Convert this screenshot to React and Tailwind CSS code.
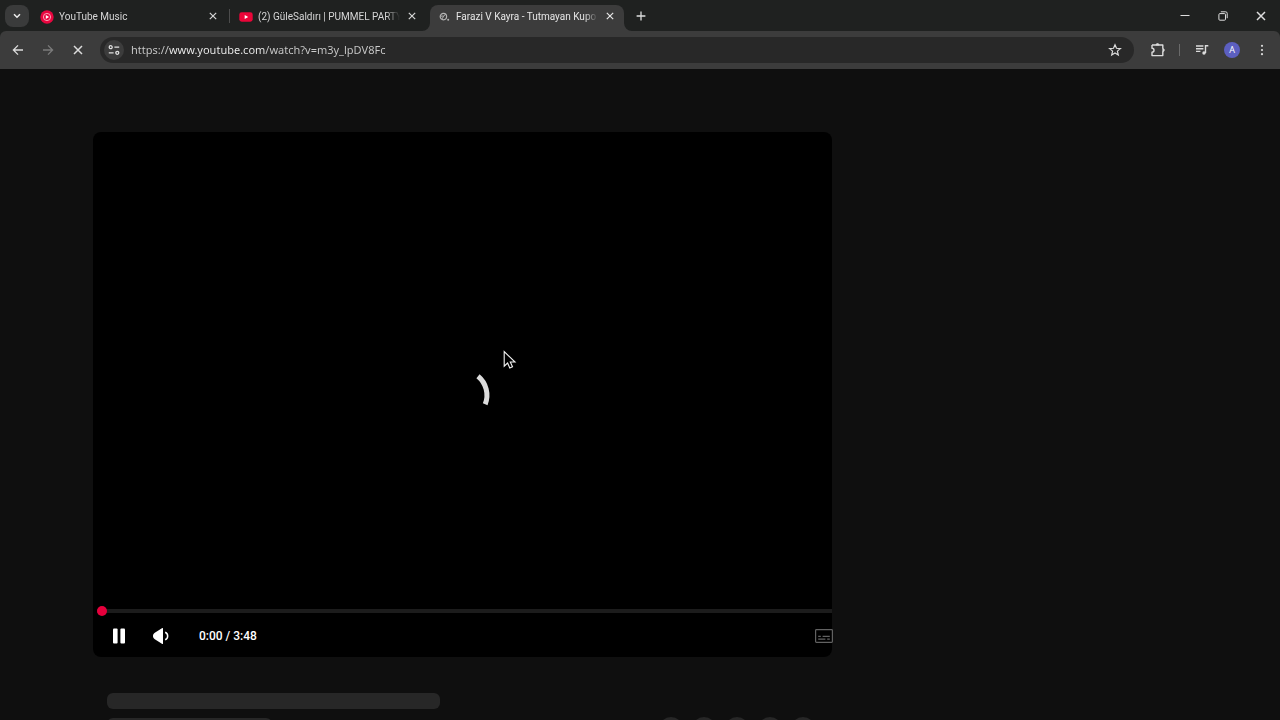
import React from "react";

function CloseIcon({ className }) {
  return (
    <svg viewBox="0 0 8 8" className={className} fill="none" stroke="currentColor" strokeWidth="1.2" aria-hidden="true">
      <path d="M0.8 0.8 7.2 7.2M7.2 0.8 0.8 7.2" />
    </svg>
  );
}

function MusicFavicon() {
  return (
    <svg viewBox="0 0 14 14" className="size-3.5 shrink-0" aria-hidden="true">
      <circle cx="7" cy="7" r="6.7" fill="#e8063f" />
      <circle cx="7" cy="7" r="3.6" fill="none" stroke="#ffc4d2" strokeWidth="0.8" />
      <path d="M5.8 5v4L9.1 7z" fill="#fff" />
    </svg>
  );
}

function VideoFavicon() {
  return (
    <svg viewBox="0 0 14 14" className="size-3.5 shrink-0" aria-hidden="true">
      <rect x="0.3" y="2.3" width="13.4" height="9.4" rx="2.4" fill="#ea0538" />
      <path d="M5.7 5v4L9.2 7z" fill="#fff" />
    </svg>
  );
}

function LoadingFavicon() {
  return (
    <svg viewBox="0 0 14 14" className="size-3.5 shrink-0" fill="none" stroke="#b4b4b4" aria-hidden="true">
      <circle cx="5.4" cy="6.6" r="3.2" strokeWidth="1.2" />
      <path d="M2.8 6.2 5.6 6 7.6 4.4M3.8 9 5.8 6.2" strokeWidth="1" />
      <circle cx="10.2" cy="9.8" r="1" fill="#b4b4b4" stroke="none" />
    </svg>
  );
}

function Tab({ icon, title, active, divided }) {
  return (
    <div
      className={
        active
          ? "relative flex h-[26px] w-[194px] shrink-0 items-center rounded-t-lg bg-[#3c3c3c] pr-2 pl-2 text-[#e6e6e6]"
          : "relative flex h-[26px] w-[199px] shrink-0 items-center pr-3 pl-2 text-[#d6d6d6]"
      }
    >
      {active && (
        <>
          <svg viewBox="0 0 8 8" className="absolute bottom-0 -left-2 size-2" aria-hidden="true">
            <path d="M8 0v8H0A8 8 0 0 0 8 0z" fill="#3c3c3c" />
          </svg>
          <svg viewBox="0 0 8 8" className="absolute -right-2 bottom-0 size-2" aria-hidden="true">
            <path d="M0 0v8h8A8 8 0 0 1 0 0z" fill="#3c3c3c" />
          </svg>
        </>
      )}
      {divided && <span className="absolute top-1 right-px h-3.5 w-px bg-[#4c4c4c]" />}
      <button
        type="button"
        role="tab"
        aria-selected={Boolean(active)}
        className={active ? "flex min-w-0 flex-1 items-center gap-1 pb-[3px]" : "flex min-w-0 flex-1 items-center gap-[5px] pb-[3px]"}
      >
        {icon}
        <span className="min-w-0 flex-1 overflow-hidden text-left font-[Roboto,sans-serif] text-[10px] leading-4 whitespace-nowrap [mask-image:linear-gradient(to_right,black_calc(100%-14px),transparent)]">
          {title}
        </span>
      </button>
      <button type="button" aria-label={`Close ${title}`} className="ml-1.5 flex h-4 w-3 shrink-0 items-center justify-center pb-1">
        <CloseIcon className="h-2 w-2" />
      </button>
    </div>
  );
}

function TabStrip() {
  return (
    <div className="flex h-[31px] items-end bg-[#1f2120] text-[#dedede]">
      <button type="button" aria-label="Search tabs" className="mr-[3px] mb-1 ml-[5px] flex h-[22px] w-6 items-center justify-center rounded-lg bg-[#3a3b3b]">
        <svg viewBox="0 0 8 6" className="h-1.5 w-2" fill="none" stroke="#ededed" strokeWidth="1.5" aria-hidden="true">
          <path d="M1 1.2 4 4.2 7 1.2" />
        </svg>
      </button>
      <div role="tablist" className="flex">
        <Tab icon={<MusicFavicon />} title="YouTube Music" divided />
        <Tab icon={<VideoFavicon />} title="(2) GüleSaldırı | PUMMEL PARTY" />
        <Tab icon={<LoadingFavicon />} title="Farazi V Kayra - Tutmayan Kupo" active />
      </div>
      <button type="button" aria-label="New tab" className="ml-[7px] flex h-[30px] w-5 items-center justify-center">
        <svg viewBox="0 0 10 10" className="size-2.5" fill="none" stroke="currentColor" strokeWidth="1.3" aria-hidden="true">
          <path d="M5 0.6v8.8M0.6 5h8.8" />
        </svg>
      </button>
      <div className="ml-auto flex h-[30px]">
        <button type="button" aria-label="Minimize" className="flex w-[38px] items-center justify-center">
          <svg viewBox="0 0 10 10" className="size-2.5" stroke="currentColor" aria-hidden="true"><path d="M0.5 4.5h9" /></svg>
        </button>
        <button type="button" aria-label="Restore" className="flex w-[38px] items-center justify-center">
          <svg viewBox="0 0 10 10" className="size-2.5" fill="none" stroke="currentColor" aria-hidden="true">
            <rect x="0.9" y="2.6" width="6.6" height="6.6" rx="1" />
            <path d="M2.8 0.8h4.8a1.6 1.6 0 0 1 1.6 1.6v4.8" />
          </svg>
        </button>
        <button type="button" aria-label="Close window" className="flex w-[38px] items-center justify-center">
          <CloseIcon className="size-2.5" />
        </button>
      </div>
    </div>
  );
}

function Toolbar() {
  return (
    <div className="bg-[#1f2120]">
      <div className="flex h-[38px] items-center rounded-t-md bg-[#3c3c3c] px-[3px] text-[#dcdcdc]">
        <button type="button" aria-label="Back" className="flex w-[30px] justify-center">
          <svg viewBox="0 0 12 12" className="size-3" fill="none" stroke="currentColor" strokeWidth="1.3" aria-hidden="true">
            <path d="M11 6H1.6M6 1.4 1.4 6 6 10.6" />
          </svg>
        </button>
        <button type="button" aria-label="Forward" className="flex w-[30px] justify-center text-[#7b7b7b]">
          <svg viewBox="0 0 12 12" className="size-3" fill="none" stroke="currentColor" strokeWidth="1.3" aria-hidden="true">
            <path d="M1 6h9.4M6 1.4 10.6 6 6 10.6" />
          </svg>
        </button>
        <button type="button" aria-label="Stop loading" className="flex w-[30px] justify-center">
          <CloseIcon className="size-2.5" />
        </button>
        <div className="ml-[7px] flex h-[26px] min-w-0 flex-1 items-center rounded-full bg-[#282828] pl-1">
          <button type="button" aria-label="View site information" className="flex size-5 shrink-0 items-center justify-center rounded-full bg-[#3c3c3c]">
            <svg viewBox="0 0 12 12" className="size-3" fill="none" stroke="#e0e0e0" strokeWidth="1.3" aria-hidden="true">
              <circle cx="2.7" cy="3.2" r="1.5" />
              <path d="M6.4 3.2h4.8M0.8 8.8h4.8" />
              <circle cx="9.3" cy="8.8" r="1.5" />
            </svg>
          </button>
          <input
            type="text"
            aria-label="Address"
            defaultValue="https://www.youtube.com/watch?v=m3y_lpDV8Fc"
            className="ml-[7px] h-5 min-w-0 flex-1 bg-[linear-gradient(to_right,#cccccc_37px,#f2f2f2_37px,#f2f2f2_134px,#cccccc_134px)] bg-clip-text pb-px font-['Noto_Sans',sans-serif] text-[11px] text-transparent caret-white outline-none"
          />
          <button type="button" aria-label="Bookmark this page" className="flex w-[38px] shrink-0 justify-center">
            <svg viewBox="0 0 14 14" className="size-3.5" fill="none" stroke="currentColor" strokeWidth="1.2" strokeLinejoin="miter" aria-hidden="true">
              <path d="M7 1.7 8.5 5.3 12.4 5.6 9.4 8.1 10.3 11.9 7 9.9 3.7 11.9 4.6 8.1 1.6 5.6 5.5 5.3z" />
            </svg>
          </button>
        </div>
        <button type="button" aria-label="Extensions" className="ml-2 flex w-8 justify-center">
          <svg viewBox="0 0 16 16" className="size-4" fill="none" stroke="currentColor" strokeWidth="1.4" strokeLinejoin="round" aria-hidden="true">
            <path d="M2 3h10.8v3.8M12.8 9.2V13.6H2v-3.4a2 2 0 0 0 0-4V3" />
            <path d="M6 3a1.5 1.5 0 0 1 3 0zM12.8 6.6a1.5 1.5 0 0 1 0 3z" fill="currentColor" strokeWidth="0.8" />
          </svg>
        </button>
        <span className="ml-[5px] h-3 w-px bg-[#6a6a6a]" />
        <button type="button" aria-label="Media controls" className="ml-1.5 flex w-8 justify-center">
          <svg viewBox="0 0 14 12" className="h-3 w-3.5" fill="none" stroke="currentColor" strokeWidth="1.4" aria-hidden="true">
            <path d="M1 2h7.4M1 4.7h7.4M1 7.4h4.4M10.5 9V1.7h2.8" />
            <circle cx="9" cy="9" r="1.7" fill="currentColor" stroke="none" />
          </svg>
        </button>
        <button type="button" aria-label="Profile" className="ml-1.5 flex size-4 items-center justify-center rounded-full bg-[#5c5fc0] text-[9px] leading-4 text-white">
          A
        </button>
        <button type="button" aria-label="Browser menu" className="ml-[7px] flex w-[30px] justify-center">
          <svg viewBox="0 0 4 12" className="h-3 w-1" fill="currentColor" aria-hidden="true">
            <circle cx="2" cy="1.8" r="1.1" />
            <circle cx="2" cy="6" r="1.1" />
            <circle cx="2" cy="10.2" r="1.1" />
          </svg>
        </button>
      </div>
    </div>
  );
}

function Player() {
  return (
    <section aria-label="Video player" className="flex aspect-[739/525] flex-col rounded-lg bg-black">
      <div className="flex flex-1 items-center justify-center pt-[50px]">
        <svg viewBox="0 0 64 64" className="size-16" fill="none" stroke="#dcdcdc" strokeWidth="5" role="img" aria-label="Loading">
          <path d="M47 14.3A24.5 24.5 0 0 1 54.2 42.3" />
        </svg>
      </div>
      <div className="flex h-2.5 items-center pl-1">
        <input
          type="range"
          aria-label="Seek"
          min="0"
          max="228"
          defaultValue="0"
          className="h-2.5 w-full appearance-none bg-transparent [&::-webkit-slider-runnable-track]:h-1 [&::-webkit-slider-runnable-track]:bg-[#1c1c1c] [&::-webkit-slider-thumb]:-mt-[3px] [&::-webkit-slider-thumb]:size-2.5 [&::-webkit-slider-thumb]:appearance-none [&::-webkit-slider-thumb]:rounded-full [&::-webkit-slider-thumb]:bg-[#e6003c]"
        />
      </div>
      <div className="flex h-[41px] items-center pb-0.5 pl-3 text-white">
        <button type="button" aria-label="Pause" className="flex w-7 justify-center">
          <svg viewBox="0 0 14 16" className="h-4 w-3.5" fill="currentColor" aria-hidden="true">
            <rect x="1" y="0.6" width="4.6" height="14.8" rx="1" />
            <rect x="8.4" y="0.6" width="4.6" height="14.8" rx="1" />
          </svg>
        </button>
        <button type="button" aria-label="Mute" className="ml-3.5 flex w-7 justify-center">
          <svg viewBox="0 0 18 18" className="size-[18px]" aria-hidden="true">
            <path d="M11 1.6v14.8c0 .6-.6.8-1.1.4L2.8 12.2C1.5 11.4 1 10.4 1 9s.5-2.4 1.8-3.2L9.9 1.2c.5-.4 1.1-.2 1.1.4z" fill="#fff" />
            <path d="M13.2 5.2c3.3 1.5 3.3 6.1 0 7.6" fill="none" stroke="#fff" strokeWidth="1.5" />
          </svg>
        </button>
        <span className="ml-6 font-[Roboto,sans-serif] text-xs leading-4 font-medium">0:00 / 3:48</span>
        <button type="button" aria-label="Subtitles" className="-mr-px ml-auto text-[#626262]">
          <svg viewBox="0 0 18 14" className="h-3.5 w-[18px]" fill="none" stroke="currentColor" aria-hidden="true">
            <rect x="0.6" y="0.6" width="16.8" height="12.8" rx="0.8" strokeWidth="1.2" />
            <path d="M3.2 7.3h2.6M7.6 7.3h7.2M3.2 10.2h7.2M12.2 10.2h2.6" strokeWidth="1.3" />
          </svg>
        </button>
      </div>
    </section>
  );
}

function VideoDetailsSkeleton() {
  return (
    <div className="pt-9 pl-3.5" aria-hidden="true">
      <div className="h-4 w-[333px] rounded-md bg-[#272727]" />
      <div className="mt-2 flex justify-between pr-[17px]">
        <div className="mt-px h-4 w-[165px] rounded-md bg-[#272727]" />
        <div className="flex gap-[9px]">
          {[0, 1, 2, 3, 4].map((n) => (
            <div key={n} className="size-6 rounded-full bg-[#272727]" />
          ))}
        </div>
      </div>
    </div>
  );
}

function Cursor() {
  return (
    <svg viewBox="0 0 14 20" className="pointer-events-none absolute top-[350px] left-[503px] h-5 w-3.5" aria-hidden="true">
      <path d="M1.2 1.6v14.6l3.4-3.2 2.2 4.9 2.7-1.2-2.2-4.7h4.7z" fill="#000" stroke="#f2f2f2" strokeWidth="1.1" />
    </svg>
  );
}

export default function App() {
  return (
    <div className="relative flex h-screen flex-col overflow-hidden bg-[#0f0f0f] font-['Open_Sans',sans-serif]">
      <header className="shrink-0">
        <TabStrip />
        <Toolbar />
      </header>
      <main className="flex min-h-0 flex-1 overflow-hidden pt-[63px] pl-[93px]">
        <div className="min-w-0 flex-1">
          <Player />
          <VideoDetailsSkeleton />
        </div>
        <aside aria-label="Up next" className="w-[448px] shrink-0" />
      </main>
      <Cursor />
    </div>
  );
}
